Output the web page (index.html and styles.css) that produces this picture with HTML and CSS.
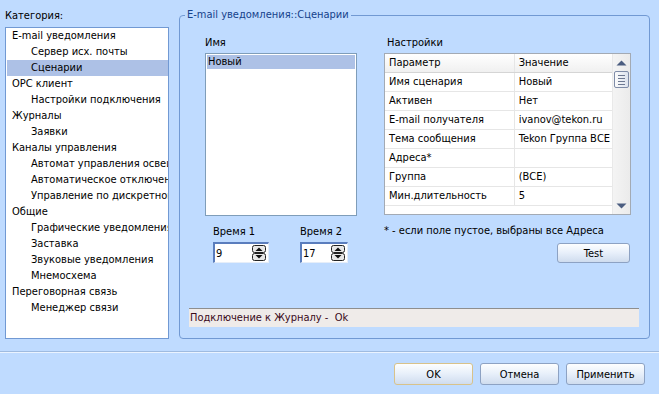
FILE: index.html
```html
<!DOCTYPE html>
<html lang="ru">
<head>
  <meta charset="UTF-8" />
  <title>Настройки</title>
  <link rel="stylesheet" href="styles.css">
</head>
<body>
  <div class="dialog">
    <div class="main">
      <div class="categories">
        <div class="cat-label">Категория:</div>
        <ul class="tree">
          <li class="root">E-mail уведомления</li>
          <li class="child">Сервер исх. почты</li>
          <li class="child selected">Сценарии</li>
          <li class="root">OPC клиент</li>
          <li class="child">Настройки подключения</li>
          <li class="root">Журналы</li>
          <li class="child">Заявки</li>
          <li class="root">Каналы управления</li>
          <li class="child">Автомат управления освещением</li>
          <li class="child">Автоматическое отключение</li>
          <li class="child">Управление по дискретному входу</li>
          <li class="root">Общие</li>
          <li class="child">Графические уведомления</li>
          <li class="child">Заставка</li>
          <li class="child">Звуковые уведомления</li>
          <li class="child">Мнемосхема</li>
          <li class="root">Переговорная связь</li>
          <li class="child">Менеджер связи</li>
        </ul>
      </div>

      <div class="group">
        <span class="group-title">E-mail уведомления::Сценарии</span>
        <div class="panes">
          <div class="pane-name">
            <div class="caption">Имя</div>
            <div class="listbox">
              <div class="list-item selected">Новый</div>
            </div>
            <div class="times">
              <div class="time first">
                <div class="caption">Время 1</div>
                <div class="spin wide">
                  <span class="spin-value">9</span>
                  <svg class="spin-btns" width="14" height="16" viewBox="0 0 14 16">
                    <rect x="0.5" y="0.5" width="13" height="7" rx="2" fill="#e8e8e8" stroke="#222"/>
                    <rect x="0.5" y="8.5" width="13" height="7" rx="2" fill="#e8e8e8" stroke="#222"/>
                    <path d="M3.5 6 L7 2.5 L10.5 6 Z" fill="#111"/>
                    <path d="M3.5 10 L7 13.5 L10.5 10 Z" fill="#111"/>
                  </svg>
                </div>
              </div>
              <div class="time second">
                <div class="caption">Время 2</div>
                <div class="spin narrow">
                  <span class="spin-value">17</span>
                  <svg class="spin-btns" width="14" height="16" viewBox="0 0 14 16">
                    <rect x="0.5" y="0.5" width="13" height="7" rx="2" fill="#e8e8e8" stroke="#222"/>
                    <rect x="0.5" y="8.5" width="13" height="7" rx="2" fill="#e8e8e8" stroke="#222"/>
                    <path d="M3.5 6 L7 2.5 L10.5 6 Z" fill="#111"/>
                    <path d="M3.5 10 L7 13.5 L10.5 10 Z" fill="#111"/>
                  </svg>
                </div>
              </div>
            </div>
          </div>

          <div class="pane-settings">
            <div class="caption settings-caption">Настройки</div>
            <div class="grid">
              <div class="grid-body">
                <div class="grid-row head">
                  <div class="cell param">Параметр</div>
                  <div class="cell value">Значение</div>
                </div>
                <div class="grid-row">
                  <div class="cell param">Имя сценария</div>
                  <div class="cell value">Новый</div>
                </div>
                <div class="grid-row">
                  <div class="cell param">Активен</div>
                  <div class="cell value">Нет</div>
                </div>
                <div class="grid-row">
                  <div class="cell param">E-mail получателя</div>
                  <div class="cell value">ivanov@tekon.ru</div>
                </div>
                <div class="grid-row">
                  <div class="cell param">Тема сообщения</div>
                  <div class="cell value">Tekon Группа ВСЕ</div>
                </div>
                <div class="grid-row">
                  <div class="cell param">Адреса*</div>
                  <div class="cell value"></div>
                </div>
                <div class="grid-row">
                  <div class="cell param">Группа</div>
                  <div class="cell value">(ВСЕ)</div>
                </div>
                <div class="grid-row">
                  <div class="cell param">Мин.длительность</div>
                  <div class="cell value">5</div>
                </div>
              </div>
              <div class="scrollbar">
                <svg class="arrow" width="11" height="6" viewBox="0 0 11 6"><path d="M0.5 5.5 L5.5 0.5 L10.5 5.5 Z" fill="#4b5d80"/></svg>
                <div class="thumb">
                  <span></span><span></span><span></span><span></span>
                </div>
                <div class="track"></div>
                <svg class="arrow" width="11" height="6" viewBox="0 0 11 6"><path d="M0.5 0.5 L5.5 5.5 L10.5 0.5 Z" fill="#4b5d80"/></svg>
              </div>
            </div>
            <div class="note">* - если поле пустое, выбраны все Адреса</div>
            <div class="test-row">
              <button class="btn test">Test</button>
            </div>
          </div>
        </div>
        <div class="status">Подключение к Журналу -&nbsp; Ok</div>
      </div>
    </div>

    <div class="separator"></div>

    <div class="footer">
      <button class="btn default">OK</button>
      <button class="btn">Отмена</button>
      <button class="btn">Применить</button>
    </div>
  </div>
</body>
</html>
```

FILE: styles.css
```css
body {
  margin: 0;
  background: #bfdbff;
  font-family: "DejaVu Sans Condensed", "DejaVu Sans", sans-serif;
  font-size: 11px;
  color: #000;
}
.dialog {
  width: 659px;
  height: 394px;
  overflow: hidden;
}
.main {
  display: flex;
  align-items: flex-start;
}

/* left tree */
.categories {
  margin-left: 5px;
  width: 164px;
}
.cat-label {
  height: 18px;
  padding-top: 9px;
  line-height: 13px;
  box-sizing: border-box;
  height: 27px;
}
.tree {
  list-style: none;
  margin: 0;
  padding: 0 0 0 1px;
  height: 312px;
  box-sizing: border-box;
  border: 1px solid #7199d3;
  background: white;
  overflow: hidden;
}
.tree li {
  height: 16px;
  line-height: 16px;
  white-space: nowrap;
  overflow: hidden;
}
.tree .root {
  padding-left: 5px;
}
.tree .child {
  padding-left: 24px;
}
.tree .selected {
  background: #adc1e6;
}

/* group box */
.group {
  position: relative;
  margin-left: 10px;
  margin-top: 15px;
  width: 471px;
  height: 324px;
  box-sizing: border-box;
  border: 1px solid #7199d3;
  border-radius: 4px;
}
.group-title {
  position: absolute;
  top: -8px;
  left: 5px;
  padding: 0 2px;
  line-height: 14px;
  background: #bfdbff;
  color: #15428b;
}
.panes {
  display: flex;
  height: 292px;
  box-sizing: border-box;
  padding-top: 20px;
}
.caption {
  height: 17px;
  line-height: 13px;
}
.pane-name {
  margin-left: 25px;
  width: 152px;
}
.listbox {
  height: 163px;
  box-sizing: border-box;
  border: 1px solid #7f9db9;
  background: white;
  padding: 1px;
}
.list-item {
  height: 14px;
  line-height: 14px;
  padding-left: 1px;
}
.list-item.selected {
  background: #adc1e6;
}
.times {
  display: flex;
  margin-top: 9px;
}
.time.first {
  margin-left: 8px;
}
.time.second {
  margin-left: 31px;
}
.spin {
  display: flex;
  align-items: center;
  justify-content: space-between;
  height: 21px;
  box-sizing: border-box;
  background: white;
  border-top: 2px solid #5a7dbd;
  border-left: 2px solid #5a7dbd;
  border-right: 1px solid #e6eef9;
  border-bottom: 1px solid #e6eef9;
  padding: 0 2px 0 1px;
}
.spin.wide {
  width: 56px;
}
.spin.narrow {
  width: 48px;
}

/* settings grid */
.pane-settings {
  margin-left: 27px;
  width: 247px;
}
.settings-caption {
  padding-left: 3px;
}
.grid {
  display: flex;
  height: 162px;
  box-sizing: border-box;
  border: 1px solid #a3aab4;
  background: white;
}
.grid-body {
  width: 227px;
  overflow: hidden;
}
.grid-row {
  display: flex;
  height: 19px;
  box-sizing: border-box;
  border-bottom: 1px solid #e6e6e6;
}
.grid-row.head {
  background: linear-gradient(#ffffff, #f0f0f0);
  border-bottom: 1px solid #d5d5d5;
}
.cell {
  line-height: 18px;
  white-space: nowrap;
  overflow: hidden;
}
.cell.param {
  width: 132px;
  box-sizing: border-box;
  padding-left: 4px;
  border-right: 1px solid #e6e6e6;
}
.cell.value {
  width: 95px;
  padding-left: 4px;
}
.scrollbar {
  display: flex;
  flex-direction: column;
  align-items: center;
  width: 18px;
  box-sizing: border-box;
  border-left: 1px solid #e9e9e9;
  background: linear-gradient(to right, #f4f4f4, #ebebeb);
  padding: 6px 0 5px;
}
.thumb {
  display: flex;
  flex-direction: column;
  align-items: center;
  justify-content: center;
  gap: 2px;
  margin-top: 5px;
  width: 15px;
  height: 17px;
  box-sizing: border-box;
  border: 1px solid #7f8ca8;
  border-radius: 2px;
  background: linear-gradient(to right, #fbfbfb, #dde3ee);
}
.thumb span {
  width: 7px;
  height: 1px;
  background: #6d7891;
}
.track {
  flex: 1;
}
.note {
  margin-top: 9px;
  line-height: 13px;
}
.test-row {
  display: flex;
  justify-content: flex-end;
  margin-top: 6px;
  padding-right: 1px;
}

/* status line */
.status {
  margin-left: 9px;
  width: 450px;
  height: 19px;
  box-sizing: border-box;
  border-top: 1px solid #8e8e8e;
  background: #efebe9;
  color: #3a0a1a;
  line-height: 18px;
  padding-left: 1px;
}

/* bottom */
.separator {
  margin-top: 12px;
  height: 1px;
  background: #9fbbe0;
  border-bottom: 1px solid #eaf3ff;
}
.footer {
  display: flex;
  justify-content: flex-end;
  gap: 7px;
  margin-top: 10px;
  padding-right: 14px;
}
.btn {
  width: 79px;
  height: 22px;
  font-family: inherit;
  font-size: 11px;
  color: #000;
  border: 1px solid #8da2c3;
  border-radius: 3px;
  background: linear-gradient(#fdfeff, #e7effa 50%, #cfdcee);
  padding: 0;
}
.btn.default {
  border-color: #d8c28a;
}
.btn.test {
  width: 73px;
  height: 20px;
}
```
